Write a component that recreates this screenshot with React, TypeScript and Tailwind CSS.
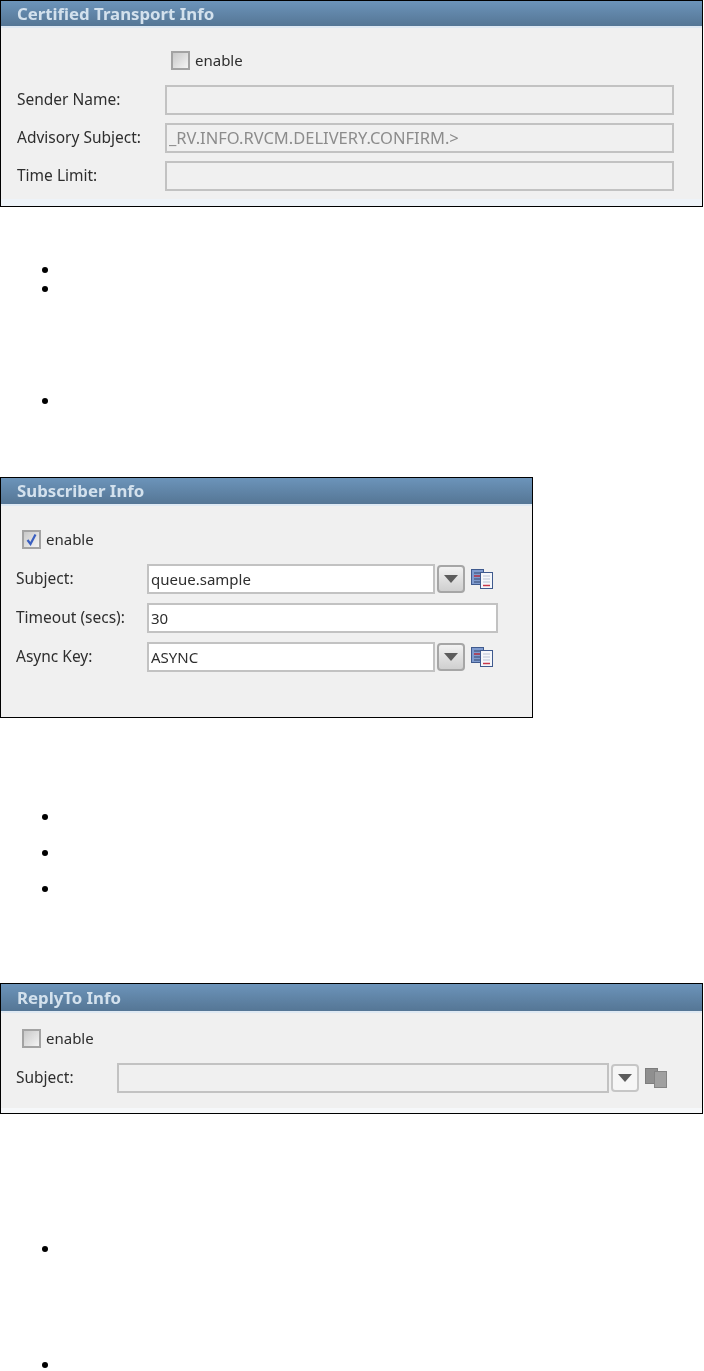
const FONT = 'font-["Noto_Sans",sans-serif]'

// one empty list bullet, as left behind in the source document
function Bullet({ className }: { className: string }) {
  return <div className={`ml-[42px] size-[6px] rounded-full bg-black ${className}`} />
}

function Header({ title, h }: { title: string; h: string }) {
  return (
    <div className={`flex items-center border-b-2 border-[#dfe9f3] bg-gradient-to-b from-[#6c94ba] to-[#557695] pl-[16px] ${h}`}>
      <span className="text-[16.8px] font-bold text-[#d3e1ed]">{title}</span>
    </div>
  )
}

function Checkbox({ checked }: { checked?: boolean }) {
  return (
    <span className="flex size-[19px] items-center justify-center border-2 border-[#a3a3a3] bg-gradient-to-br from-[#c9c9c9] to-[#f4f4f4]">
      {checked && (
        <svg width="13" height="13" viewBox="0 0 13 13">
          <path d="M2.5 7 L5.5 11 L10.5 1.5" fill="none" stroke="#3a5fc0" strokeWidth="2.2" />
        </svg>
      )}
    </span>
  )
}

function Enable({ checked, className }: { checked?: boolean; className: string }) {
  return (
    <div className={`flex h-[20px] items-center gap-[5px] text-[15px] text-[#2e2e2e] ${className}`}>
      <Checkbox checked={checked} />
      <span>enable</span>
    </div>
  )
}

function Field({ value, white, muted, className }: { value?: string; white?: boolean; muted?: boolean; className: string }) {
  return (
    <div className={`flex h-[30px] shrink-0 items-center border-2 border-[#c2c2c2] pl-[2px] ${white ? 'bg-white' : 'bg-[#f0f0f0]'} ${muted ? 'text-[16.5px] text-[#8c8c8c]' : 'text-[15px] text-[#2e2e2e]'} ${className}`}>
      {value}
    </div>
  )
}

function DropButton({ light }: { light?: boolean }) {
  return (
    <div className={`ml-[2px] flex h-[28px] w-[28px] shrink-0 items-center justify-center rounded-[4px] border-2 ${light ? 'border-[#c6c6c6] bg-[#f6f6f6]' : 'border-[#a6a6a6] bg-gradient-to-b from-[#f2f2f2] to-[#cfcfcf]'}`}>
      <svg width="14" height="8" viewBox="0 0 14 8">
        <path d="M0 0 H14 L7 8 Z" fill="#5c5c5c" />
      </svg>
    </div>
  )
}

function PickerIcon({ disabled }: { disabled?: boolean }) {
  if (disabled) {
    return (
      <svg width="23" height="20" viewBox="0 0 23 20" className="ml-[6px] shrink-0">
        <rect x="0.5" y="0.5" width="12" height="15" fill="#8f8f8f" stroke="#7d7d7d" />
        <rect x="9.5" y="3.5" width="12" height="16" fill="#a0a0a0" stroke="#848484" />
      </svg>
    )
  }
  return (
    <svg width="23" height="20" viewBox="0 0 23 20" className="ml-[6px] shrink-0">
      <rect x="0.5" y="0.5" width="12" height="15" fill="#7f9bcf" stroke="#3f5a8e" />
      <path d="M3 4h7M3 7h7M3 10h7M3 13h7" stroke="#33466e" strokeWidth="1.2" />
      <path d="M3 7h7" stroke="#c8384a" strokeWidth="1.4" />
      <rect x="9.5" y="3.5" width="12" height="16" fill="#f5f7fb" stroke="#3f5a8e" />
      <path d="M12 7h7M12 10h7M12 13h7" stroke="#b9c3d6" strokeWidth="1.1" />
      <path d="M12 16.5h7" stroke="#c8384a" strokeWidth="1.5" />
    </svg>
  )
}

function Label({ text, w }: { text: string; w: string }) {
  return <span className={`shrink-0 text-[15.5px] text-[#2e2e2e] ${w}`}>{text}</span>
}

export default function App() {
  return (
    <div className={`h-[1371px] w-[704px] overflow-hidden bg-white ${FONT}`}>
      {/* Certified Transport Info */}
      <section className="h-[207px] w-[703px] border border-black bg-[#f0f0f0] blur-[0.4px]">
        <Header title="Certified Transport Info" h="h-[27px]" />
        <Enable className="mt-[22px] ml-[170px]" />
        <div className="mt-[15px] flex flex-col gap-[8px] pl-[16px]">
          <div className="flex items-center"><Label text="Sender Name:" w="w-[148px]" /><Field className="w-[509px]" /></div>
          <div className="flex items-center"><Label text="Advisory Subject:" w="w-[148px]" /><Field className="w-[509px]" muted value="_RV.INFO.RVCM.DELIVERY.CONFIRM.>" /></div>
          <div className="flex items-center"><Label text="Time Limit:" w="w-[148px]" /><Field className="w-[509px]" /></div>
        </div>
        <div className="mt-[8px] h-[7px] bg-[#eef3f8]" />
      </section>

      <Bullet className="mt-[60px]" />
      <Bullet className="mt-[13px]" />
      <Bullet className="mt-[106px]" />

      {/* Subscriber Info */}
      <section className="mt-[73px] h-[241px] w-[533px] border border-black bg-[#f0f0f0] blur-[0.4px]">
        <Header title="Subscriber Info" h="h-[28px]" />
        <Enable checked className="mt-[23px] ml-[21px]" />
        <div className="mt-[15px] flex flex-col gap-[9px] pl-[15px]">
          <div className="flex items-center"><Label text="Subject:" w="w-[131px]" /><Field className="w-[288px]" white value="queue.sample" /><DropButton /><PickerIcon /></div>
          <div className="flex items-center"><Label text="Timeout (secs):" w="w-[131px]" /><Field className="w-[351px]" white value="30" /></div>
          <div className="flex items-center"><Label text="Async Key:" w="w-[131px]" /><Field className="w-[288px]" white value="ASYNC" /><DropButton /><PickerIcon /></div>
        </div>
      </section>

      <Bullet className="mt-[96px]" />
      <Bullet className="mt-[30px]" />
      <Bullet className="mt-[30px]" />

      {/* ReplyTo Info */}
      <section className="mt-[91px] h-[131px] w-[703px] border border-black bg-[#f0f0f0] blur-[0.4px]">
        <Header title="ReplyTo Info" h="h-[29px]" />
        <Enable className="mt-[15px] ml-[21px]" />
        <div className="mt-[15px] flex items-center pl-[15px]">
          <Label text="Subject:" w="w-[101px]" />
          <Field className="w-[492px]" />
          <DropButton light />
          <PickerIcon disabled />
        </div>
        <div className="mt-[15px] h-[5px] bg-[#f6f8fa]" />
      </section>

      <Bullet className="mt-[132px]" />
      <Bullet className="mt-[110px]" />
    </div>
  )
}
